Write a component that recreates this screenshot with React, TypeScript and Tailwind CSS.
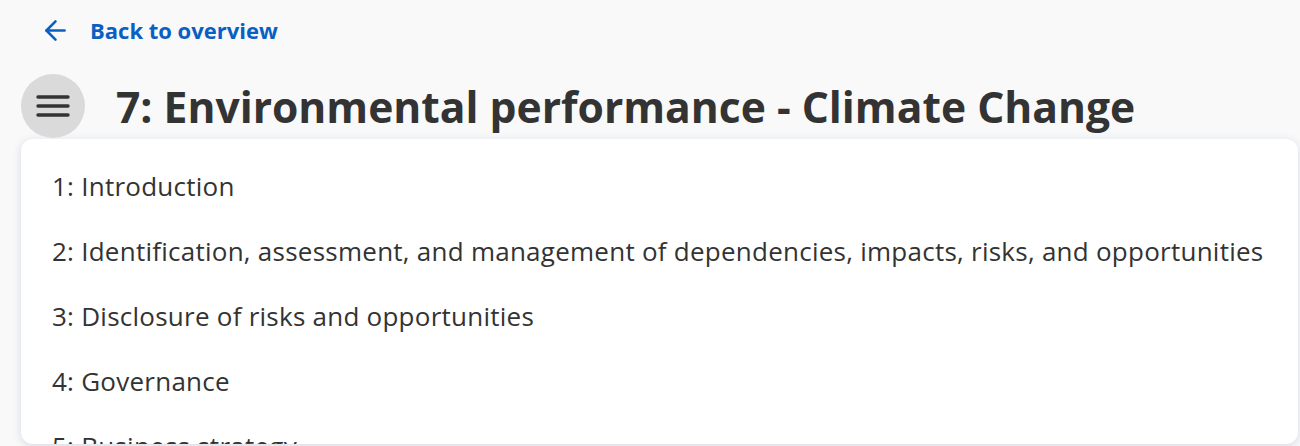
import { ArrowLeft } from "lucide-react";

const sections = [
	"1: Introduction",
	"2: Identification, assessment, and management of dependencies, impacts, risks, and opportunities",
	"3: Disclosure of risks and opportunities",
	"4: Governance",
	"5: Business strategy",
	"6: Implementation",
];

const App = () => {
	return (
		<div
			className="h-[446px] w-[1300px] overflow-hidden bg-[#f9f9fa] text-[#333]"
			style={{ fontFamily: "'Open Sans', 'Noto Sans', sans-serif" }}
		>
			<div className="flex h-[60px] items-center gap-[19px] pl-[40px]">
				<ArrowLeft size={31} strokeWidth={2} className="text-[#0a60c2]" />
				<span className="text-[22px] font-bold text-[#0a60c2]">Back to overview</span>
			</div>

			<div className="mt-[14px] flex items-center gap-[31px] pl-[21px]">
				<div className="flex h-[64px] w-[64px] items-center justify-center rounded-full bg-[#dadada]">
					<svg width="34" height="24" viewBox="0 0 34 24">
						<g stroke="#333" strokeWidth="3.4" strokeLinecap="round">
							<line x1="2" y1="3" x2="32" y2="3" />
							<line x1="2" y1="12" x2="32" y2="12" />
							<line x1="2" y1="21" x2="32" y2="21" />
						</g>
					</svg>
				</div>
				<h1 className="text-[42.6px] font-bold leading-none text-[#333]">
					7: Environmental performance - Climate Change
				</h1>
			</div>

			<div className="ml-[21px] mr-[2px] mt-[1px] h-[305px] overflow-hidden rounded-[12px] bg-white pt-[30px] shadow-[0_2px_10px_rgba(60,80,120,0.18)]">
				{sections.map((s, i) => (
					<div
						key={i}
						className="h-[65px] pl-[31px] text-[26px] leading-[35px] tracking-[0.25px] text-[#333]"
					>
						{s}
					</div>
				))}
			</div>
		</div>
	);
};

export default App;
